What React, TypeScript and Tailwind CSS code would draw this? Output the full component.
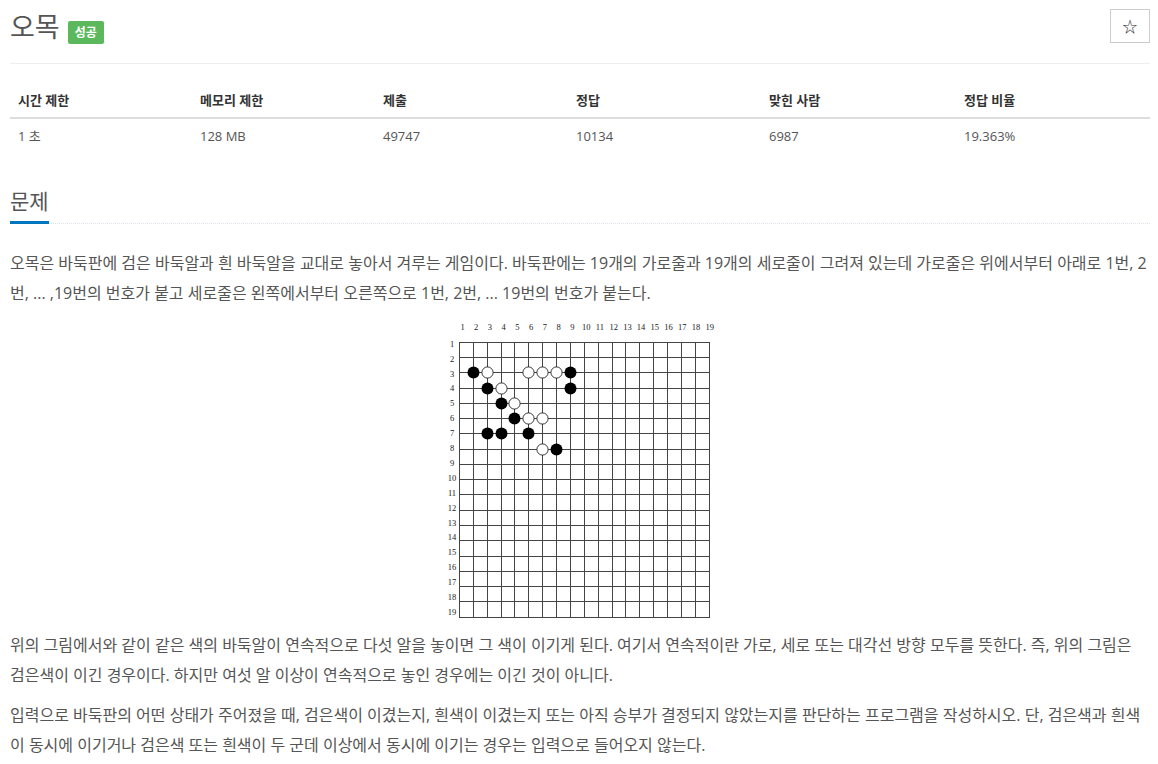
import React from 'react'

const COLS = 19
const ROWS = 19
const X0 = 14
const Y0 = 23.7
const DX = 13.87
const DY = 15.28

const black: [number, number][] = [
  [2, 3], [9, 3], [3, 4], [9, 4], [4, 5], [5, 6], [3, 7], [4, 7], [6, 7], [8, 8],
]
const white: [number, number][] = [
  [3, 3], [6, 3], [7, 3], [8, 3], [4, 4], [5, 5], [6, 6], [7, 6], [7, 8],
]

const cx = (c: number) => X0 + (c - 1) * DX
const cy = (r: number) => Y0 + (r - 1) * DY
const px = (v: number) => Math.round(v) + 0.5

function Board() {
  const nums = Array.from({ length: 19 }, (_, i) => i + 1)
  return (
    <svg width="270" height="302" viewBox="0 0 270 302" className="block">
      <g fontFamily="'Liberation Serif', serif" fontSize="8.5" fill="#222">
        {nums.map((n) => (
          <text key={'t' + n} x={cx(n) + 3.5 - (n - 1) * 0.13} y={12} textAnchor="middle">{n}</text>
        ))}
        {nums.map((n) => (
          <text key={'l' + n} x={7} y={cy(n) + 5 - (n - 1) * 0.38} textAnchor="middle">{n}</text>
        ))}
      </g>
      <g stroke="#444" strokeWidth="1" shapeRendering="crispEdges">
        {Array.from({ length: COLS }, (_, i) => (
          <line key={'v' + i} x1={px(cx(i + 1))} y1={Math.round(cy(1))} x2={px(cx(i + 1))} y2={Math.round(cy(ROWS)) + 1} />
        ))}
        {Array.from({ length: ROWS }, (_, i) => (
          <line key={'h' + i} x1={Math.round(cx(1))} y1={px(cy(i + 1))} x2={Math.round(cx(COLS)) + 1} y2={px(cy(i + 1))} />
        ))}
      </g>
      {black.map(([c, r], i) => (
        <circle key={'b' + i} cx={px(cx(c))} cy={px(cy(r))} r="6" fill="#000" />
      ))}
      {white.map(([c, r], i) => (
        <circle key={'w' + i} cx={px(cx(c))} cy={px(cy(r))} r="5.6" fill="#fff" stroke="#222" strokeWidth="0.9" />
      ))}
    </svg>
  )
}

const stats = [
  ['시간 제한', '1 초'],
  ['메모리 제한', '128 MB'],
  ['제출', '49747'],
  ['정답', '10134'],
  ['맞힌 사람', '6987'],
  ['정답 비율', '19.363%'],
]

export default function App() {
  return (
    <div className="min-h-screen bg-white pl-[10px] pr-[8px] text-[#555]" style={{ fontFamily: "'Open Sans', 'Noto Sans CJK KR', sans-serif" }}>
      <div className="flex items-start justify-between pt-[9px] pb-[18px] border-b border-[#eee]">
        <h1 className="flex items-start gap-[8px] text-[27px] leading-[36px] text-[#555]">
          오목
          <span className="mt-[12px] rounded-[2px] bg-[#5cb85c] px-[7px] py-[4px] text-[12px] font-bold leading-[15px] text-white">성공</span>
        </h1>
        <button className="flex h-[34px] w-[40px] items-center justify-center border border-[#ccc] bg-white text-[15px] text-[#333]">☆</button>
      </div>

      <div className="mt-[19px] text-[13px] text-[#333]">
        <div className="grid grid-cols-[182px_183px_193px_193px_195px_1fr] border-b-2 border-[#ddd] font-bold">
          {stats.map(([h]) => (
            <div key={h} className="px-[8px] py-[8px] leading-[18px]">{h}</div>
          ))}
        </div>
        <div className="grid grid-cols-[182px_183px_193px_193px_195px_1fr]">
          {stats.map(([h, v]) => (
            <div key={h} className="px-[8px] py-[8px] leading-[18px] text-[#555]">{v}</div>
          ))}
        </div>
      </div>

      <div className="mt-[33px] border-b border-dotted border-[#dde3ea]">
        <h2 className="-mb-px inline-block border-b-[3px] border-[#0076c0] pb-[5px] text-[21px] leading-[30px] text-[#555]">문제</h2>
      </div>

      <div className="mt-[24px] text-[16px] leading-[30px]">
        <p className="mb-[10px]">
          오목은 바둑판에 검은 바둑알과 흰 바둑알을 교대로 놓아서 겨루는 게임이다. 바둑판에는 19개의 가로줄과 19개의 세로줄이 그려져 있는데 가로줄은 위에서부터 아래로 1번, 2번, ... ,19번의 번호가 붙고 세로줄은 왼쪽에서부터 오른쪽으로 1번, 2번, ... 19번의 번호가 붙는다.
        </p>
        <div className="mb-[10px] flex justify-center">
          <Board />
        </div>
        <p className="mb-[10px]">
          위의 그림에서와 같이 같은 색의 바둑알이 연속적으로 다섯 알을 놓이면 그 색이 이기게 된다. 여기서 연속적이란 가로, 세로 또는 대각선 방향 모두를 뜻한다. 즉, 위의 그림은 검은색이 이긴 경우이다. 하지만 여섯 알 이상이 연속적으로 놓인 경우에는 이긴 것이 아니다.
        </p>
        <p>
          입력으로 바둑판의 어떤 상태가 주어졌을 때, 검은색이 이겼는지, 흰색이 이겼는지 또는 아직 승부가 결정되지 않았는지를 판단하는 프로그램을 작성하시오. 단, 검은색과 흰색이 동시에 이기거나 검은색 또는 흰색이 두 군데 이상에서 동시에 이기는 경우는 입력으로 들어오지 않는다.
        </p>
      </div>
    </div>
  )
}
